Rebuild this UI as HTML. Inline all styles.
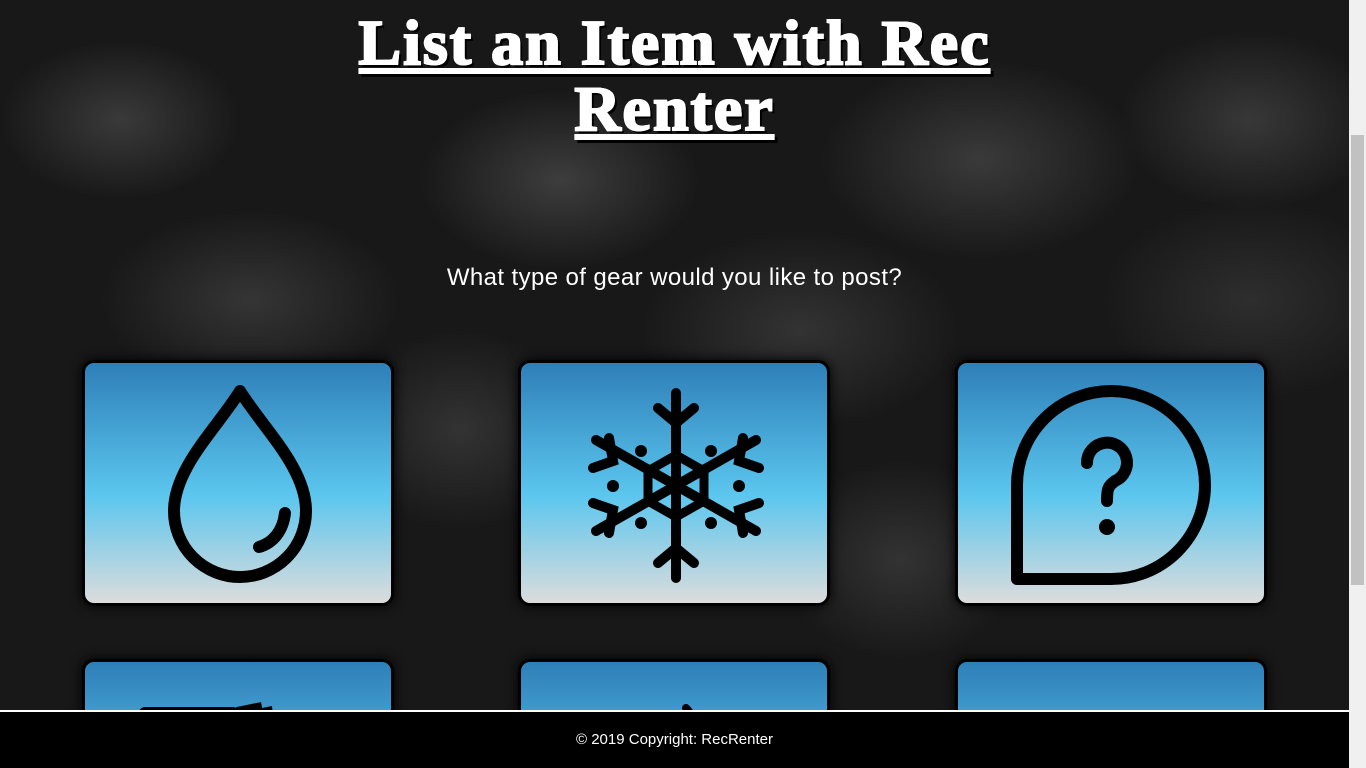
<!DOCTYPE html>
<html><head><meta charset="utf-8"><style>
html,body{margin:0;padding:0;width:1366px;height:768px;overflow:hidden}
body{font-family:"Liberation Sans",sans-serif;background:#141414;position:relative}
.bg{position:absolute;left:0;top:0;width:1349px;height:710px;
background:
radial-gradient(ellipse 120px 80px at 120px 120px,#3a3a3a,transparent),
radial-gradient(ellipse 140px 90px at 560px 180px,#3d3d3d,transparent),
radial-gradient(ellipse 160px 100px at 980px 160px,#3a3a3a,transparent),
radial-gradient(ellipse 130px 90px at 1250px 120px,#383838,transparent),
radial-gradient(ellipse 150px 90px at 250px 300px,#353535,transparent),
radial-gradient(ellipse 160px 100px at 800px 330px,#333,transparent),
radial-gradient(ellipse 150px 100px at 1250px 300px,#2e2e2e,transparent),
radial-gradient(ellipse 120px 100px at 460px 430px,#333,transparent),
radial-gradient(ellipse 120px 100px at 900px 560px,#333,transparent),
#181818}
.sb{position:absolute;left:1349px;top:0;width:17px;height:768px;background:#f0f0f0}
.sb div{position:absolute;left:2px;top:135px;width:13px;height:450px;background:#c1c1c1}
h1{position:absolute;top:10px;left:0;width:1349px;margin:0;text-align:center;color:#fff;font-family:"Liberation Serif",serif;font-weight:bold;font-size:64px;line-height:66px;letter-spacing:2px;text-decoration:underline;-webkit-text-stroke:2px #fff;text-shadow:3px 3px 0 #000}
.q{position:absolute;top:264px;left:0;width:1349px;text-align:center;color:#fff;font-size:24px;letter-spacing:0.4px}
.card{position:absolute;width:306px;height:240px;border:3px solid #000;border-radius:12px;background:linear-gradient(#2e7fb8,#5bc6ee 55%,#dcdcdc 100%);box-shadow:0 0 12px #000;overflow:hidden}
.card svg{position:absolute;left:52px;top:20px;overflow:visible}
.foot{position:absolute;left:0;top:710px;width:1349px;height:58px;background:#000;border-top:2px solid #fff;color:#fff;text-align:center;font-size:15px;line-height:56px}
</style></head><body>
<div class="bg"></div>
<h1>List an Item with Rec<br>Renter</h1>
<div class="q">What type of gear would you like to post?</div>
<div class="card" style="left:82px;top:360px"><svg width="200" height="200" viewBox="0 0 200 200"><path d="M103 8 C80 45 37 85 37 128 A66 66 0 0 0 169 128 C169 85 126 45 103 8Z" fill="none" stroke="#000" stroke-width="12" stroke-linejoin="round"/><path d="M148 130 C146 148 136 160 122 164" fill="none" stroke="#000" stroke-width="12" stroke-linecap="round"/></svg></div>
<div class="card" style="left:518px;top:360px"><svg width="200" height="200" viewBox="0 0 200 200" fill="none" stroke="#000" stroke-width="10" stroke-linecap="round"><path d="M103 10V195M23 57L183 148M23 148L183 57"/><path d="M85 25L103 40L121 25M85 180L103 165L121 180M20 85L40 78L36 55M186 85L166 78L170 55M20 120L40 127L36 150M186 120L166 127L170 150"/><path d="M103 72L131 88V118L103 134L75 118V88Z" stroke-width="9"/><g fill="#000" stroke="none"><circle cx="68" cy="68" r="6"/><circle cx="138" cy="68" r="6"/><circle cx="40" cy="103" r="6"/><circle cx="166" cy="103" r="6"/><circle cx="68" cy="140" r="6"/><circle cx="138" cy="140" r="6"/></g></svg></div>
<div class="card" style="left:955px;top:360px"><svg width="200" height="200" viewBox="0 0 200 200"><path d="M7 102V196H101A94 94 0 1 0 7 102Z" fill="none" stroke="#000" stroke-width="12" stroke-linejoin="round"/><path d="M77 80A20 20 0 1 1 105 98C98 103 97 106 97 118" fill="none" stroke="#000" stroke-width="12" stroke-linecap="round"/><circle cx="97" cy="144" r="8" fill="#000"/></svg></div>
<div class="card" style="left:82px;top:659px"><svg width="200" height="60" viewBox="0 0 200 60"><rect x="2" y="25" width="100" height="40" rx="6" fill="#000"/><path d="M100 30L125 25M130 25C132 35 130 45 128 55M160 45C170 45 180 50 180 60" stroke="#000" stroke-width="10" fill="none"/></svg></div>
<div class="card" style="left:518px;top:659px"><svg width="200" height="60" viewBox="0 0 200 60"><path d="M113 26C122 35 120 48 110 55" stroke="#000" stroke-width="8" fill="none" stroke-linecap="round"/></svg></div>
<div class="card" style="left:955px;top:659px"><svg width="200" height="60" viewBox="0 0 200 60"><path d="M45 40L48 62M48 42H65V60" stroke="#000" stroke-width="8" fill="none"/><path d="M75 48H95V60H75Z" fill="#000"/></svg></div>
<div class="sb"><div></div></div>
<div class="foot">© 2019 Copyright: RecRenter</div>
</body></html>
